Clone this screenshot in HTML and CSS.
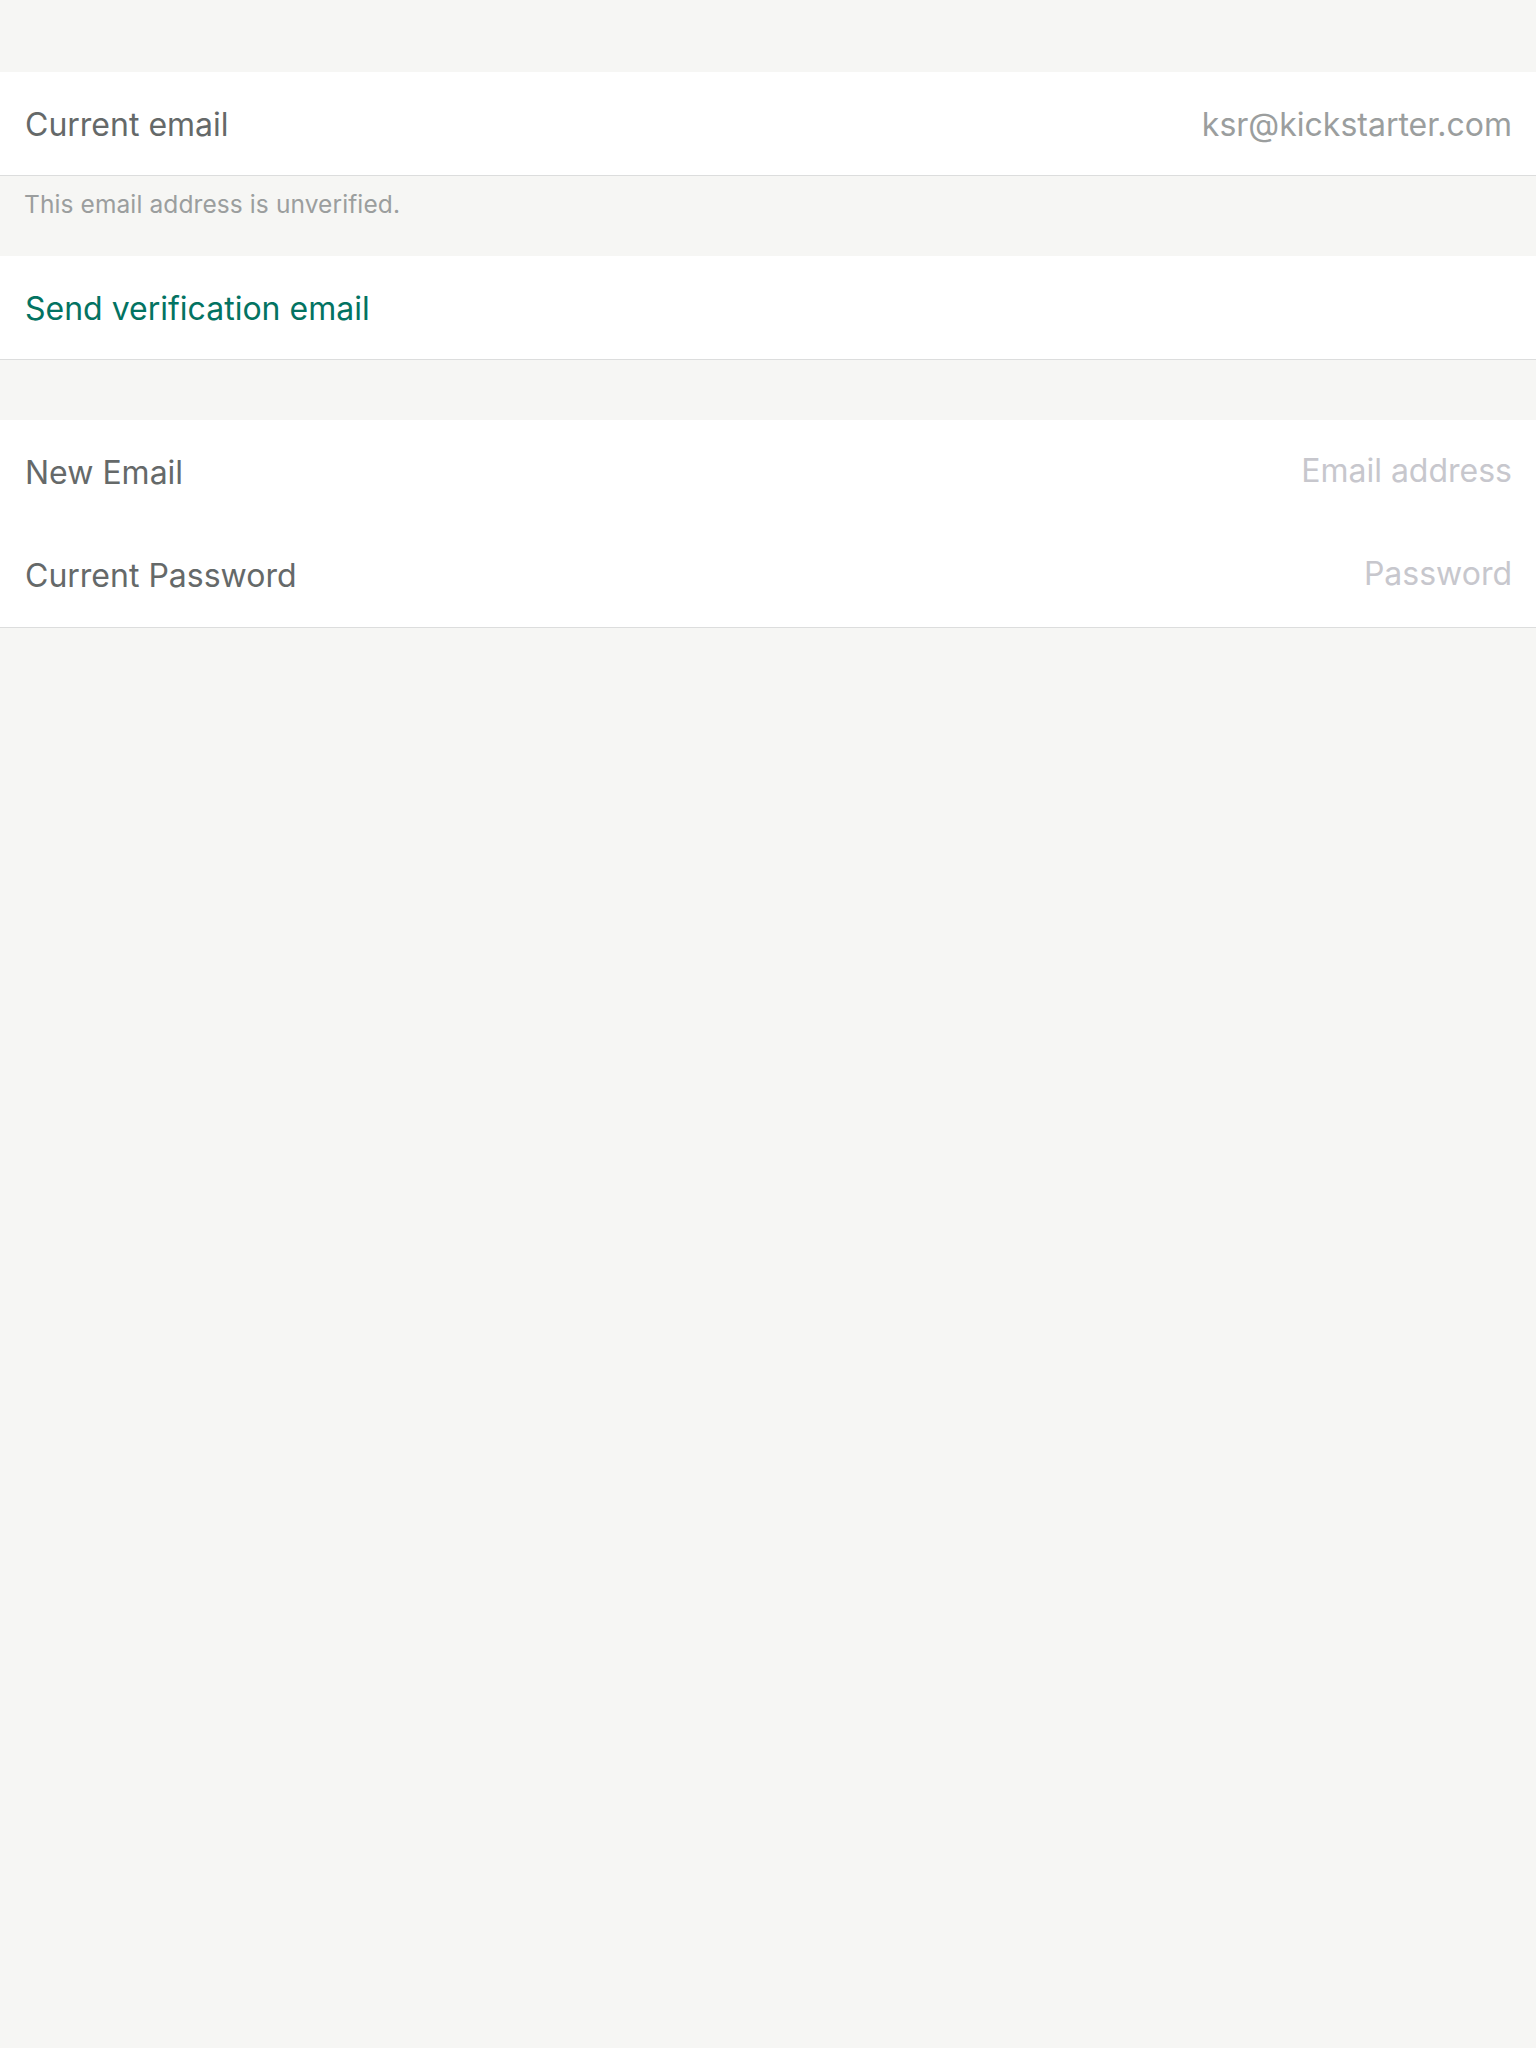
FILE: index.html
```html
<!DOCTYPE html>
<html>
<head>
<meta charset="utf-8">
<link rel="stylesheet" href="styles.css">
</head>
<body>
<div class="page">
  <section class="group first">
    <div class="row">
      <span class="label">Current email</span>
      <span class="value">ksr@kickstarter.com</span>
    </div>
  </section>
  <div class="hint">This email address is unverified.</div>
  <section class="group">
    <div class="row">
      <span class="action">Send verification email</span>
    </div>
  </section>
  <section class="group form">
    <div class="row">
      <span class="label">New Email</span>
      <span class="placeholder">Email address</span>
    </div>
    <div class="row">
      <span class="label">Current Password</span>
      <span class="placeholder">Password</span>
    </div>
  </section>
</div>
</body>
</html>
```
FILE: styles.css
```css
html, body {
  margin: 0;
  padding: 0;
  background: #f6f6f4;
  font-family: Inter, "Noto Sans", "Liberation Sans", sans-serif;
}
.page {
  display: flex;
  flex-direction: column;
  padding-top: 72px;
}
.group {
  background: #ffffff;
  border-bottom: 1px solid #dcdddd;
  display: flex;
  flex-direction: column;
}
.form {
  margin-top: 60px;
}
.row {
  height: 103px;
  box-sizing: border-box;
  display: flex;
  align-items: center;
  justify-content: space-between;
  padding: 1px 24px 0 25px;
  font-size: 32px;
}
.form .row {
  height: 103.5px;
}
.label {
  color: #656969;
}
.value {
  color: #9b9e9e;
}
.action {
  color: #037362;
}
.placeholder {
  color: #c7c7cd;
  position: relative;
  top: -2px;
}
.hint {
  height: 80px;
  box-sizing: border-box;
  padding: 13px 24px 0;
  font-size: 24.5px;
  color: #9b9e9e;
  letter-spacing: 0.1px;
}
```
